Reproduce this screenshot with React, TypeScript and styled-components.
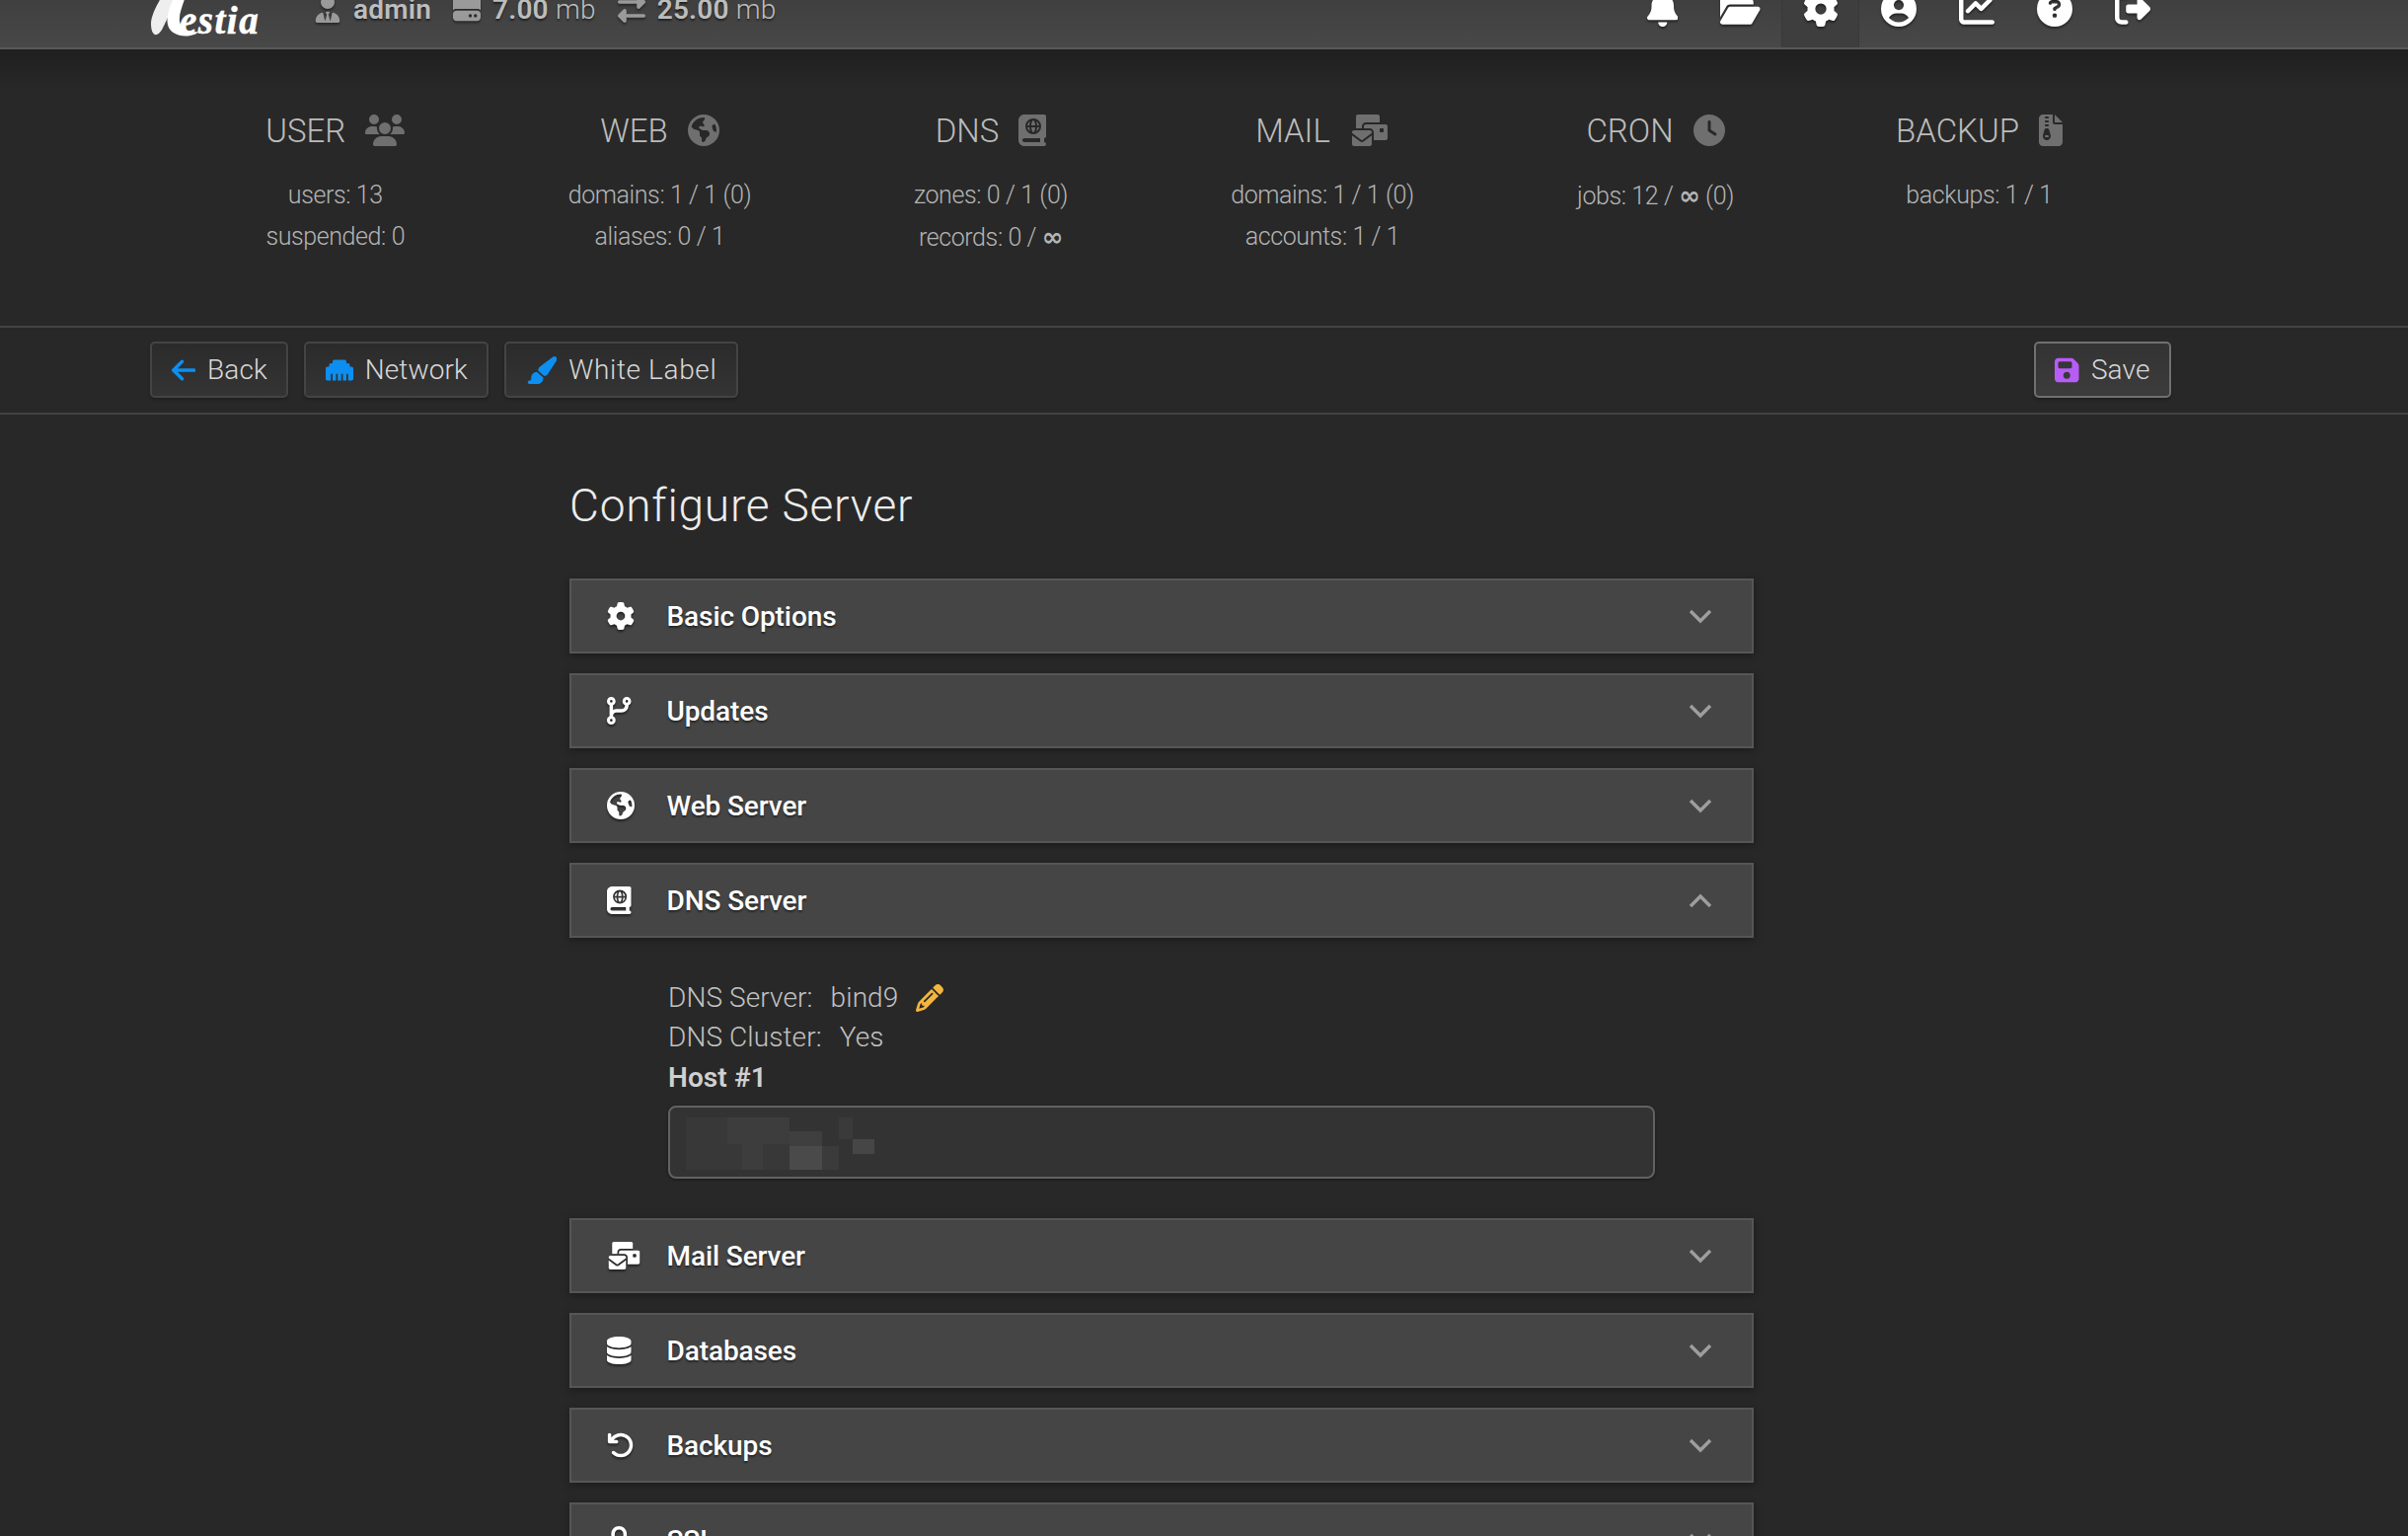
import React from "react";
import styled, { createGlobalStyle } from "styled-components";
import {
  FaArrowLeft, FaArrowRotateLeft, FaBell, FaBookAtlas, FaChartLine, FaCircleQuestion, FaCircleUser, FaClock,
  FaCodeBranch, FaDatabase, FaEarthAmericas, FaEnvelopesBulk, FaEthernet, FaFileZipper, FaFloppyDisk, FaFolderOpen,
  FaGear, FaHardDrive, FaLock, FaPaintbrush, FaPencil, FaRightFromBracket, FaRightLeft, FaUsers, FaUserTie,
} from "react-icons/fa6";

const FONT = `Roboto, "Liberation Sans", sans-serif`;

const wide = (Icon: React.ComponentType<any>, ratio: number) => styled(Icon)`
  && { width: ${ratio}em; height: 1em; flex: none; }
`;

const BellIcon = wide(FaBell, 0.875);
const FolderIcon = wide(FaFolderOpen, 1.125);
const UsersIcon = wide(FaUsers, 1.25);
const MailIcon = wide(FaEnvelopesBulk, 1.25);
const BookIcon = wide(FaBookAtlas, 0.875);
const ZipIcon = wide(FaFileZipper, 0.75);
const ArrowIcon = wide(FaArrowLeft, 0.875);
const BrushIcon = wide(FaPaintbrush, 1.125);
const SaveIcon = wide(FaFloppyDisk, 0.875);
const BranchIcon = wide(FaCodeBranch, 0.875);
const DatabaseIcon = wide(FaDatabase, 0.875);
const LockIcon = wide(FaLock, 0.875);

const Global = createGlobalStyle`
  html, body { margin: 0; height: 1556px; overflow: hidden; background: #282828; }
  * { box-sizing: border-box; }
  body { font-family: ${FONT}; color: #c4c4c4; }
`;

const Page = styled.div`
  margin-top: -30px;
`;

const Header = styled.header`
  height: 80px;
  padding: 0 240px 0 152px;
  display: flex;
  align-items: center;
  background: linear-gradient(#3a3a3a, #484848);
  border-bottom: 2px solid #585858;
`;

const Logo = styled.div`
  width: 166px;
  height: 78px;
  display: flex;
  align-items: flex-end;
  padding-bottom: 9px;
`;

const LogoSwash = styled.svg`
  width: 42px;
  height: 62px;
  flex: none;
  overflow: visible;
`;

const LogoText = styled.span`
  font-family: "Liberation Serif", serif;
  font-style: italic;
  font-weight: 700;
  font-size: 39px;
  line-height: 39px;
  color: #fff;
  -webkit-text-stroke: 0.5px #fff;
  margin: 0 0 -1px -12px;
  letter-spacing: 1.5px;
`;

const UserInfo = styled.div`
  display: flex;
  align-items: center;
  font-size: 28px;
  letter-spacing: 0.2px;
  color: #bdbdbd;
  text-shadow: 0 2px 2px rgba(0, 0, 0, 0.5);
`;

const InfoItem = styled.div`
  display: flex;
  align-items: center;
  margin-right: 22px;
  svg { color: #9a9a9a; font-size: 28px; margin-right: 12px; filter: drop-shadow(0 2px 1px rgba(0, 0, 0, 0.4)); }
  b { font-weight: 600; }
  span { font-weight: 300; }
`;

const Nav = styled.nav`
  margin-left: auto;
  display: flex;
  align-self: stretch;
`;

const NavItem = styled.a<{ $active?: boolean }>`
  padding: 0 21.5px;
  display: flex;
  align-items: center;
  justify-content: center;
  font-size: 36px;
  color: #fff;
  background: ${(p) => (p.$active ? "#3e3e3e" : "transparent")};
  box-shadow: ${(p) => (p.$active ? "inset 1px 0 #383838, inset -1px 0 #383838" : "none")};
  svg { filter: drop-shadow(0 2px 1px rgba(0, 0, 0, 0.45)); }
`;

const Stats = styled.section`
  height: 282px;
  padding: 66px 0 0 172px;
  display: grid;
  grid-template-columns: 335.5px 322px 349px 323px 352px 304px;
  align-content: start;
  background: linear-gradient(#1f1f1f, #282828 40px);
  border-bottom: 2px solid #434343;
`;

const Stat = styled.div`
  display: flex;
  flex-direction: column;
  align-items: center;
`;

const StatTitle = styled.h3`
  margin: 0 0 29px;
  height: 32px;
  display: flex;
  align-items: center;
  gap: 20px;
  font-size: 33px;
  font-weight: 300;
  color: #bcbcbc;
  svg { color: #6f6f6f; font-size: 32px; }
`;

const StatLine = styled.div`
  font-size: 25px;
  font-weight: 300;
  letter-spacing: -0.4px;
  line-height: 42px;
  color: #b4b4b4;
  white-space: nowrap;
`;

const Infinity = styled.span`
  font-family: "DejaVu Sans", sans-serif;
  font-weight: 700;
  font-size: 26px;
`;

const Toolbar = styled.div`
  height: 88px;
  padding: 14px 240px 0 152px;
  display: flex;
  gap: 16px;
  border-bottom: 2px solid #434343;
`;

const Button = styled.a<{ $primary?: boolean; $tracking?: number }>`
  height: 57px;
  padding: 0 19.5px;
  display: flex;
  align-items: center;
  gap: 12px;
  font-size: 28px;
  font-weight: 300;
  letter-spacing: ${(p) => p.$tracking ?? 0.1}px;
  color: #d8d8d8;
  border: 2px solid ${(p) => (p.$primary ? "#707070" : "#444")};
  border-radius: 5px;
  background: ${(p) => (p.$primary ? "linear-gradient(#333, #3c3c3c)" : "linear-gradient(#2b2b2b, #343434)")};
  box-shadow: 0 2px 3px rgba(0, 0, 0, 0.25);
  ${(p) => (p.$primary ? "margin-left: auto;" : "")}
`;

const ButtonIcon = styled.span<{ $color: string }>`
  display: flex;
  font-size: 28px;
  color: ${(p) => p.$color};
`;

const Form = styled.main`
  width: 1200px;
  margin-left: 577px;
`;

const Title = styled.h1`
  margin: 62px 0 44px;
  font-size: 46px;
  line-height: 60px;
  font-weight: 300;
  letter-spacing: 0.8px;
  color: #ececec;
`;

const Rows = styled.div`
  display: flex;
  flex-direction: column;
  gap: 20px;
`;

const Row = styled.div`
  height: 76px;
  flex: none;
  padding: 0 40px 0 36px;
  display: flex;
  align-items: center;
  background: #454545;
  border: 2px solid #565656;
  box-shadow: 0 2px 8px rgba(0, 0, 0, 0.35);
  color: #fff;
`;

const RowIcon = styled.span`
  width: 60.5px;
  flex: none;
  display: flex;
  font-size: 28px;
  filter: drop-shadow(0 2px 1px rgba(0, 0, 0, 0.5));
`;

const RowLabel = styled.span`
  font-size: 28px;
  font-weight: 500;
  letter-spacing: -0.1px;
  text-shadow: 0 2px 2px rgba(0, 0, 0, 0.45);
`;

const Chevron = styled.svg`
  margin-left: auto;
  width: 24px;
  height: 15px;
  fill: none;
  stroke: #9e9e9e;
  stroke-width: 3.4;
`;

const Panel = styled.div`
  padding: 20.5px 0 20px 100px;
  font-size: 28px;
  font-weight: 300;
  letter-spacing: 0.1px;
  line-height: 40.5px;
  color: #c2c2c2;
  display: flex;
  flex-direction: column;
  align-items: flex-start;
`;

const PanelLine = styled.div`
  display: flex;
  align-items: center;
  gap: 18px;
  b { font-weight: 600; color: #d0d0d0; }
  svg { color: #f4b63f; font-size: 28px; }
`;

const Input = styled.div`
  width: 1000px;
  height: 74px;
  margin-top: 8px;
  padding: 10px 16px;
  background: #333;
  border: 2px solid #626262;
  border-radius: 8px;
  box-shadow: 0 1px 3px rgba(0, 0, 0, 0.4);
`;

const Mosaic = styled.svg`
  display: block;
  width: 193px;
  height: 53px;
`;

const sections: [string, React.ReactNode][] = [
  ["Basic Options", <FaGear />],
  ["Updates", <BranchIcon />],
  ["Web Server", <FaEarthAmericas />],
];
const after: [string, React.ReactNode][] = [
  ["Mail Server", <MailIcon />],
  ["Databases", <DatabaseIcon />],
  ["Backups", <FaArrowRotateLeft />],
  ["SSL", <LockIcon />],
];

function SectionRow({ label, icon, open }: { label: string; icon: React.ReactNode; open?: boolean }) {
  return (
    <Row>
      <RowIcon>{icon}</RowIcon>
      <RowLabel>{label}</RowLabel>
      <Chevron viewBox="0 0 24 15">
        <polyline points={open ? "2,13 12,3 22,13" : "2,2 12,12 22,2"} />
      </Chevron>
    </Row>
  );
}

export default function App() {
  return (
    <Page>
      <Global />
      <Header>
        <Logo>
          <LogoSwash viewBox="0 0 42 62">
            <g transform="translate(-12 23)">
              <path fill="#eeeeee" d="M32,-18 C26,-6 13,12 13,24 C13,31 15,36 19,35 C23,34 26,26 29,20 C32,13 37,5 40,-2 L38,-14 Z" />
              <path fill="#ffffff" d="M37,-4 C32,6 28,17 30,25 C32,34 43,38 53,36 C57,35 60,34 61,32 C53,33 44,30 42,22 C41,14 45,6 48,-4 Z" />
            </g>
          </LogoSwash>
          <LogoText>estia</LogoText>
        </Logo>
        <UserInfo>
          <InfoItem><FaUserTie /><b>admin</b></InfoItem>
          <InfoItem><FaHardDrive /><b>7.00</b>&nbsp;<span>mb</span></InfoItem>
          <InfoItem><FaRightLeft /><b>25.00</b>&nbsp;<span>mb</span></InfoItem>
        </UserInfo>
        <Nav>
          <NavItem><BellIcon /></NavItem>
          <NavItem><FolderIcon /></NavItem>
          <NavItem $active><FaGear /></NavItem>
          <NavItem><FaCircleUser /></NavItem>
          <NavItem><FaChartLine /></NavItem>
          <NavItem><FaCircleQuestion /></NavItem>
          <NavItem><FaRightFromBracket /></NavItem>
        </Nav>
      </Header>
      <Stats>
        <Stat>
          <StatTitle>USER <UsersIcon /></StatTitle>
          <StatLine>users: 13</StatLine>
          <StatLine>suspended: 0</StatLine>
        </Stat>
        <Stat>
          <StatTitle>WEB <FaEarthAmericas /></StatTitle>
          <StatLine>domains: 1 / 1 (0)</StatLine>
          <StatLine>aliases: 0 / 1</StatLine>
        </Stat>
        <Stat>
          <StatTitle>DNS <BookIcon /></StatTitle>
          <StatLine>zones: 0 / 1 (0)</StatLine>
          <StatLine>records: 0 / <Infinity>∞</Infinity></StatLine>
        </Stat>
        <Stat>
          <StatTitle>MAIL <MailIcon /></StatTitle>
          <StatLine>domains: 1 / 1 (0)</StatLine>
          <StatLine>accounts: 1 / 1</StatLine>
        </Stat>
        <Stat>
          <StatTitle>CRON <FaClock /></StatTitle>
          <StatLine>jobs: 12 / <Infinity>∞</Infinity> (0)</StatLine>
        </Stat>
        <Stat>
          <StatTitle>BACKUP <ZipIcon /></StatTitle>
          <StatLine>backups: 1 / 1</StatLine>
        </Stat>
      </Stats>
      <Toolbar>
        <Button><ButtonIcon $color="#0c8ff0"><ArrowIcon /></ButtonIcon>Back</Button>
        <Button><ButtonIcon $color="#0c8ff0"><FaEthernet /></ButtonIcon>Network</Button>
        <Button $tracking={0.62}><ButtonIcon $color="#0c8ff0"><BrushIcon /></ButtonIcon>White Label</Button>
        <Button $primary><ButtonIcon $color="#b85cf6"><SaveIcon /></ButtonIcon>Save</Button>
      </Toolbar>
      <Form>
        <Title>Configure Server</Title>
        <Rows>
          {sections.map(([l, i]) => <SectionRow key={l} label={l} icon={i} />)}
          <SectionRow label="DNS Server" icon={<BookIcon />} open />
          <Panel>
            <PanelLine>DNS Server: <span>bind9</span><FaPencil /></PanelLine>
            <PanelLine>DNS Cluster: <span>Yes</span></PanelLine>
            <PanelLine><b>Host #1</b></PanelLine>
            <Input>
              <Mosaic viewBox="0 0 193 53">
                <rect x="0" y="0" width="105" height="53" fill="#383838" />
                <rect x="42" y="0" width="63" height="27" fill="#3d3d3d" />
                <rect x="57" y="27" width="21" height="26" fill="#3d3d3d" />
                <rect x="105" y="14" width="33" height="39" fill="#3f3f3f" />
                <rect x="105" y="29" width="33" height="24" fill="#4a4a4a" />
                <rect x="138" y="29" width="17" height="24" fill="#3b3b3b" />
                <rect x="155" y="0" width="14" height="22" fill="#3a3a3a" />
                <rect x="169" y="22" width="22" height="15" fill="#464646" />
              </Mosaic>
            </Input>
          </Panel>
          {after.map(([l, i]) => <SectionRow key={l} label={l} icon={i} />)}
        </Rows>
      </Form>
    </Page>
  );
}
